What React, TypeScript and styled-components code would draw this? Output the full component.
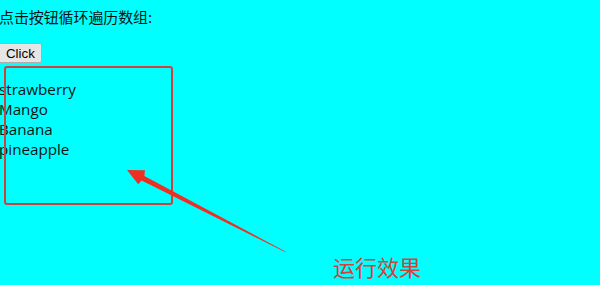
import styled, { createGlobalStyle } from "styled-components";

const GlobalStyle = createGlobalStyle`
  html, body {
    margin: 0;
    padding: 0;
    background: #00ffff;
    overflow: hidden;
  }
`;

const Page = styled.div`
  position: relative;
  width: 600px;
  height: 285px;
  background: #00ffff;
  color: #0a1414;
  font-family: "Open Sans", "Noto Sans CJK SC", sans-serif;
  font-size: 15px;
  display: flex;
  flex-direction: column;
  align-items: flex-start;
  margin-left: -1px;
`;

const Title = styled.p`
  margin: 6px 0 0 0;
  line-height: 22px;
  font-family: "Noto Sans CJK SC", sans-serif;
  font-size: 15px;
  letter-spacing: -0.1px;
`;

const ClickButton = styled.button`
  margin-top: 15px;
  margin-left: -1px;
  height: 20px;
  padding: 0 6px 0 7px;
  font-family: "Liberation Sans", Arial, sans-serif;
  font-size: 13.3px;
  color: #000;
  background: #e6e6e6;
  border: 1px solid #adadad;
  border-radius: 2px;
`;

const FruitList = styled.div`
  margin-top: 16px;
  display: flex;
  flex-direction: column;
`;

const Fruit = styled.div`
  line-height: 20px;
  font-size: 15.2px;
`;

const Frame = styled.div`
  position: absolute;
  left: 5px;
  top: 66px;
  width: 165px;
  height: 135px;
  border: 2.5px solid #c9443c;
  border-radius: 3px;
`;

const Arrow = styled.svg`
  position: absolute;
  left: 0;
  top: 0;
  pointer-events: none;
`;

const Caption = styled.div`
  position: absolute;
  left: 334px;
  top: 251px;
  font-family: "Noto Sans CJK SC", sans-serif;
  font-size: 22px;
  line-height: 30px;
  color: #d2433a;
`;

const fruits = ["strawberry", "Mango", "Banana", "pineapple"];

export default function App() {
  return (
    <>
      <GlobalStyle />
      <Page>
        <Title>点击按钮循环遍历数组:</Title>
        <ClickButton>Click</ClickButton>
        <FruitList>
          {fruits.map((f) => (
            <Fruit key={f}>{f}</Fruit>
          ))}
        </FruitList>
        <Frame />
        <Arrow width="600" height="285" viewBox="0 0 600 285">
          <polygon
            points="287,252.5 142.6,180.6 139.2,184.2 128,170 146,170.2 145.4,176 285.5,251"
            fill="#ee3024"
          />
        </Arrow>
        <Caption>运行效果</Caption>
      </Page>
    </>
  );
}
